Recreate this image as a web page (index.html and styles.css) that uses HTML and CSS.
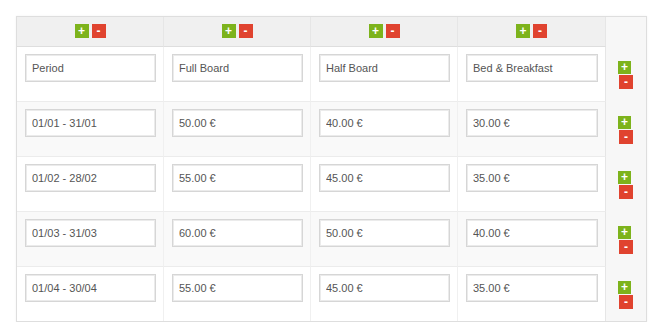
FILE: index.html
```html
<!DOCTYPE html>
<html lang="en">
<head>
    <meta charset="UTF-8">
    <title>Rates Table</title>
    <link rel="stylesheet" href="styles.css">
</head>
<body>
    <div class="page">
        <table class="rates">
            <colgroup>
                <col class="col-data">
                <col class="col-data">
                <col class="col-data">
                <col class="col-last">
                <col class="col-side">
            </colgroup>
            <thead>
                <tr>
                    <th><span class="btn add">+</span><span class="btn del">-</span></th>
                    <th><span class="btn add">+</span><span class="btn del">-</span></th>
                    <th><span class="btn add">+</span><span class="btn del">-</span></th>
                    <th><span class="btn add">+</span><span class="btn del">-</span></th>
                    <th class="side"></th>
                </tr>
            </thead>
            <tbody>
                <tr>
                    <td><input type="text" value="Period"></td>
                    <td><input type="text" value="Full Board"></td>
                    <td><input type="text" value="Half Board"></td>
                    <td><input type="text" value="Bed &amp; Breakfast"></td>
                    <td class="side"><div class="row-btns"><span class="btn add">+</span><span class="btn del">-</span></div></td>
                </tr>
                <tr class="odd">
                    <td><input type="text" value="01/01 - 31/01"></td>
                    <td><input type="text" value="50.00 €"></td>
                    <td><input type="text" value="40.00 €"></td>
                    <td><input type="text" value="30.00 €"></td>
                    <td class="side"><div class="row-btns"><span class="btn add">+</span><span class="btn del">-</span></div></td>
                </tr>
                <tr>
                    <td><input type="text" value="01/02 - 28/02"></td>
                    <td><input type="text" value="55.00 €"></td>
                    <td><input type="text" value="45.00 €"></td>
                    <td><input type="text" value="35.00 €"></td>
                    <td class="side"><div class="row-btns"><span class="btn add">+</span><span class="btn del">-</span></div></td>
                </tr>
                <tr class="odd">
                    <td><input type="text" value="01/03 - 31/03"></td>
                    <td><input type="text" value="60.00 €"></td>
                    <td><input type="text" value="50.00 €"></td>
                    <td><input type="text" value="40.00 €"></td>
                    <td class="side"><div class="row-btns"><span class="btn add">+</span><span class="btn del">-</span></div></td>
                </tr>
                <tr class="last">
                    <td><input type="text" value="01/04 - 30/04"></td>
                    <td><input type="text" value="55.00 €"></td>
                    <td><input type="text" value="45.00 €"></td>
                    <td><input type="text" value="35.00 €"></td>
                    <td class="side"><div class="row-btns"><span class="btn add">+</span><span class="btn del">-</span></div></td>
                </tr>
            </tbody>
        </table>
    </div>
</body>
</html>
```

FILE: styles.css
```css
body {
    font-family: "Liberation Sans", Arial, sans-serif;
    margin: 0;
    background-color: #fff;
    color: #555;
}

.page {
    padding: 16px 0 0 16px;
}

.rates {
    table-layout: fixed;
    width: 631px;
    border-collapse: separate;
    border-spacing: 0;
    border: 1px solid #dedede;
    box-shadow: 0 0 2px rgba(0, 0, 0, 0.06);
}

.col-data {
    width: 147px;
}

.col-last {
    width: 148px;
}

.col-side {
    width: 40px;
}

.rates th {
    background-color: #f0f0f0;
    padding: 7px 0 8px;
    border-right: 1px solid #e6e6e6;
    border-bottom: 1px solid #dedede;
    text-align: center;
    line-height: 14px;
    font-size: 0;
}

.rates td {
    padding: 7px 7px 19px 8px;
    border-right: 1px solid #f0f0f0;
    border-bottom: 1px solid #ececec;
    background-color: #fff;
}

.rates tr.odd td {
    background-color: #f9f9f9;
}

.rates tr.last td {
    border-bottom: none;
}

.rates th.side,
.rates td.side,
.rates tr.odd td.side {
    background-color: #f7f7f7;
    border-right: none;
    border-bottom: none;
}

.rates th:nth-child(4),
.rates td:nth-child(4) {
    border-right-color: #e6e6e6;
}

.rates td.side {
    padding: 14px 0 0 12px;
    vertical-align: top;
}

.rates input {
    display: block;
    box-sizing: border-box;
    width: 100%;
    height: 28px;
    margin: 0;
    padding: 0 6px;
    border: 1px solid #d6d6d6;
    box-shadow: inset 0 0 0 1px #ebebeb;
    border-radius: 0;
    font-family: "Liberation Sans", Arial, sans-serif;
    font-size: 11px;
    color: #555;
    background-color: #fff;
    outline: none;
}

.btn {
    display: inline-block;
    width: 14px;
    height: 14px;
    line-height: 14px;
    text-align: center;
    color: #fff;
    font-size: 12px;
    font-weight: bold;
    vertical-align: top;
}

.btn.add {
    background-color: #7db31c;
}

.btn.del {
    background-color: #e0432f;
    margin-left: 3px;
}

.row-btns {
    display: flex;
    flex-direction: column;
    align-items: flex-start;
}

.row-btns .btn.add {
    width: 13px;
    height: 13px;
    line-height: 13px;
}

.row-btns .btn.del {
    margin-left: 1px;
    margin-top: 1px;
}
```
